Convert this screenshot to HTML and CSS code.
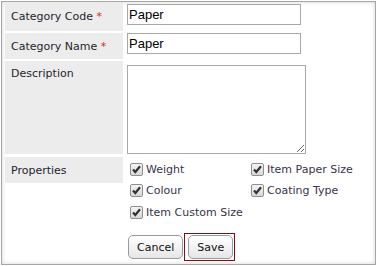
FILE: index.html
```html
<!DOCTYPE html>
<html>
<head>
<meta charset="utf-8">
<link rel="stylesheet" href="styles.css">
</head>
<body>
<div class="panel">
  <div class="row row-1">
    <div class="label">Category Code <span class="req">*</span></div>
    <div class="field"><input class="text" type="text" value="Paper"></div>
  </div>
  <div class="row row-2">
    <div class="label">Category Name <span class="req">*</span></div>
    <div class="field"><input class="text" type="text" value="Paper"></div>
  </div>
  <div class="row row-3">
    <div class="label">Description</div>
    <div class="field"><textarea class="area"></textarea></div>
  </div>
  <div class="row row-4">
    <div class="label label-short">Properties</div>
    <div class="field">
      <div class="checks">
        <label class="check"><span class="box"><svg viewBox="0 0 13 13" width="13" height="13"><path d="M3 6.5 L5.3 9 L10 3.2" fill="none" stroke="#333" stroke-width="2.2"/></svg></span>Weight</label>
        <label class="check"><span class="box"><svg viewBox="0 0 13 13" width="13" height="13"><path d="M3 6.5 L5.3 9 L10 3.2" fill="none" stroke="#333" stroke-width="2.2"/></svg></span>Item Paper Size</label>
        <label class="check"><span class="box"><svg viewBox="0 0 13 13" width="13" height="13"><path d="M3 6.5 L5.3 9 L10 3.2" fill="none" stroke="#333" stroke-width="2.2"/></svg></span>Colour</label>
        <label class="check"><span class="box"><svg viewBox="0 0 13 13" width="13" height="13"><path d="M3 6.5 L5.3 9 L10 3.2" fill="none" stroke="#333" stroke-width="2.2"/></svg></span>Coating Type</label>
        <label class="check"><span class="box"><svg viewBox="0 0 13 13" width="13" height="13"><path d="M3 6.5 L5.3 9 L10 3.2" fill="none" stroke="#333" stroke-width="2.2"/></svg></span>Item Custom Size</label>
      </div>
      <div class="buttons">
        <button class="btn">Cancel</button>
        <span class="focus-ring"><button class="btn">Save</button></span>
      </div>
    </div>
  </div>
</div>
</body>
</html>
```
FILE: styles.css
```css
html, body {
  margin: 0;
  padding: 0;
  background: #fff;
}
body {
  font-family: "DejaVu Sans", Verdana, sans-serif;
  font-size: 11px;
  color: #1f1f2e;
}
.panel {
  box-sizing: border-box;
  margin: 1px 0 0 1px;
  width: 375px;
  height: 264px;
  border: 1px solid #a6a6a6;
  box-shadow: inset 0 0 4px rgba(0, 0, 0, 0.18);
  padding: 1px 3px 0 3px;
}
.row {
  display: flex;
  gap: 2px;
  margin-bottom: 2px;
}
.row-3 { margin-bottom: 3px; }
.label {
  box-sizing: border-box;
  flex: 0 0 118px;
  background: #ececec;
  padding: 7px 6px 0 6px;
  line-height: 13px;
}
.row-1 .label { height: 28px; }
.row-2 .label { height: 26px; }
.row-3 .label { height: 93px; padding-top: 6px; }
.label-short { height: 26px; align-self: flex-start; padding-top: 7px; }
.req { color: #e0261b; }
.field {
  flex: 1;
  padding-left: 2px;
}
.row-1 .field { padding-top: 1px; }
.text {
  box-sizing: border-box;
  width: 174px;
  height: 21px;
  border: 1px solid #a9a9a9;
  padding: 0 1px;
  margin: 0;
  font-family: "Liberation Sans", Arial, sans-serif;
  font-size: 13px;
  color: #000;
  display: block;
}
.area {
  box-sizing: border-box;
  display: block;
  width: 179px;
  height: 89px;
  margin: 4px 0 0 0;
  border: 1px solid #a9a9a9;
  padding: 2px;
  resize: both;
}
.checks {
  display: grid;
  grid-template-columns: 121px auto;
  row-gap: 7.5px;
  padding: 5px 0 0 3px;
}
.check {
  display: flex;
  align-items: center;
  gap: 3px;
  height: 14px;
  color: #3a3348;
}
.box {
  box-sizing: border-box;
  width: 13px;
  height: 13px;
  border: 1px solid #8f8f8f;
  border-radius: 2px;
  background: linear-gradient(#f4f4f4, #d8d8d8);
  display: flex;
}
.box svg { margin: -1px; }
.buttons {
  display: flex;
  align-items: flex-start;
  gap: 1px;
  margin-top: 14px;
  padding-left: 1px;
}
.btn {
  box-sizing: border-box;
  height: 24px;
  padding: 0 8px;
  border: 1px solid #9a9a9a;
  border-radius: 5px;
  background: linear-gradient(#ffffff, #e6e6e6);
  font-family: "DejaVu Sans", Verdana, sans-serif;
  font-size: 11px;
  color: #111;
  margin: 0;
  display: block;
}
.buttons > .btn { margin-top: 2px; }
.focus-ring {
  display: block;
  border: 1px solid #7f1010;
  padding: 1px 1px 1px 3px;
}
```
